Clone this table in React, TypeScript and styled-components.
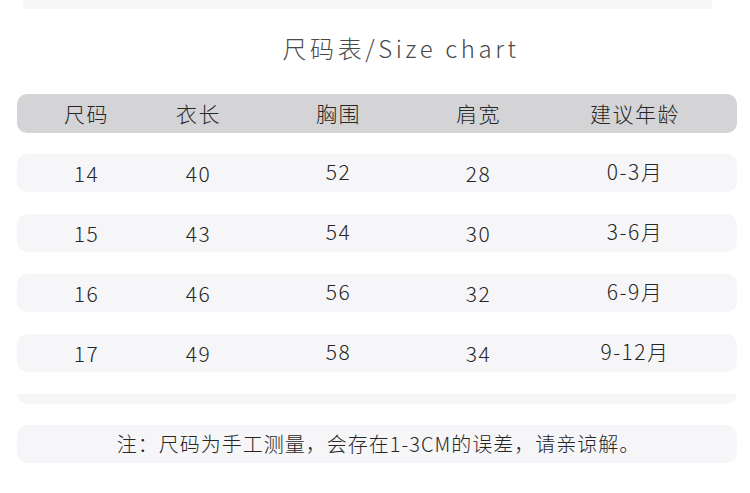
import React from "react";
import styled, { createGlobalStyle } from "styled-components";

const GlobalStyle = createGlobalStyle`
  html, body {
    margin: 0;
    padding: 0;
    background: #ffffff;
  }
  body {
    font-family: "Noto Sans CJK SC", "Noto Sans", sans-serif;
    color: #333333;
  }
`;

const headers = ["尺码", "衣长", "胸围", "肩宽", "建议年龄"];

const rows: string[][] = [
  ["14", "40", "52", "28", "0-3月"],
  ["15", "43", "54", "30", "3-6月"],
  ["16", "46", "56", "32", "6-9月"],
  ["17", "49", "58", "34", "9-12月"],
];

export default function App() {
  return (
    <Page>
      <GlobalStyle />
      <TopStrip />
      <Title>尺码表/Size chart</Title>
      <Table>
        <Row $head>
          {headers.map((h, i) => (
            <Cell key={h} $last={i === headers.length - 1}>
              {h}
            </Cell>
          ))}
        </Row>
        {rows.map((r) => (
          <Row key={r[0]}>
            {r.map((v, i) => (
              <Cell key={i} $last={i === r.length - 1} $lift={i === 2 || i === 4}>
                {v}
              </Cell>
            ))}
          </Row>
        ))}
        <RowStub />
        <Note>注：尺码为手工测量，会存在1-3CM的误差，请亲谅解。</Note>
      </Table>
    </Page>
  );
}

const Page = styled.main`
  width: 750px;
  height: 493px;
  overflow: hidden;
  background: #ffffff;
`;

const TopStrip = styled.div`
  height: 9px;
  margin: 0 38px 0 23px;
  background: #f7f7f7;
`;

const Title = styled.h1`
  margin: 20px 0 0;
  height: 38px;
  line-height: 38px;
  text-align: center;
  font-size: 24px;
  font-weight: 300;
  letter-spacing: 3.6px;
  color: #4a4a4a;
  padding-left: 52px;
`;

const Table = styled.section`
  margin: 27px 13px 0 17px;
  display: flex;
  flex-direction: column;
  gap: 22px;
`;

const Row = styled.div<{ $head?: boolean }>`
  display: grid;
  grid-template-columns: 138px 86px 194px 86px 1fr;
  align-items: center;
  height: ${(p) => (p.$head ? "39px" : "38px")};
  margin-bottom: ${(p) => (p.$head ? "-1px" : "0")};
  border-radius: 10px;
  background: ${(p) => (p.$head ? "#d4d4d6" : "#f6f6f8")};
  font-size: 21px;
  font-weight: 300;
  letter-spacing: 1.5px;
  color: #262626;
`;

const Cell = styled.div<{ $last?: boolean; $lift?: boolean }>`
  text-align: center;
  line-height: 1;
  padding-left: ${(p) => (p.$last ? "12px" : "1px")};
  position: relative;
  top: ${(p) => (p.$lift ? "-2px" : "0")};
`;

const RowStub = styled.div`
  height: 10px;
  border-radius: 0 0 10px 10px;
  background: #f6f6f8;
`;

const Note = styled.p`
  margin: -1px 0 0;
  height: 38px;
  line-height: 38px;
  border-radius: 10px;
  background: #f6f6f8;
  text-align: center;
  font-size: 20px;
  font-weight: 300;
  letter-spacing: 1px;
  color: #262626;
  padding-left: 3px;
`;
